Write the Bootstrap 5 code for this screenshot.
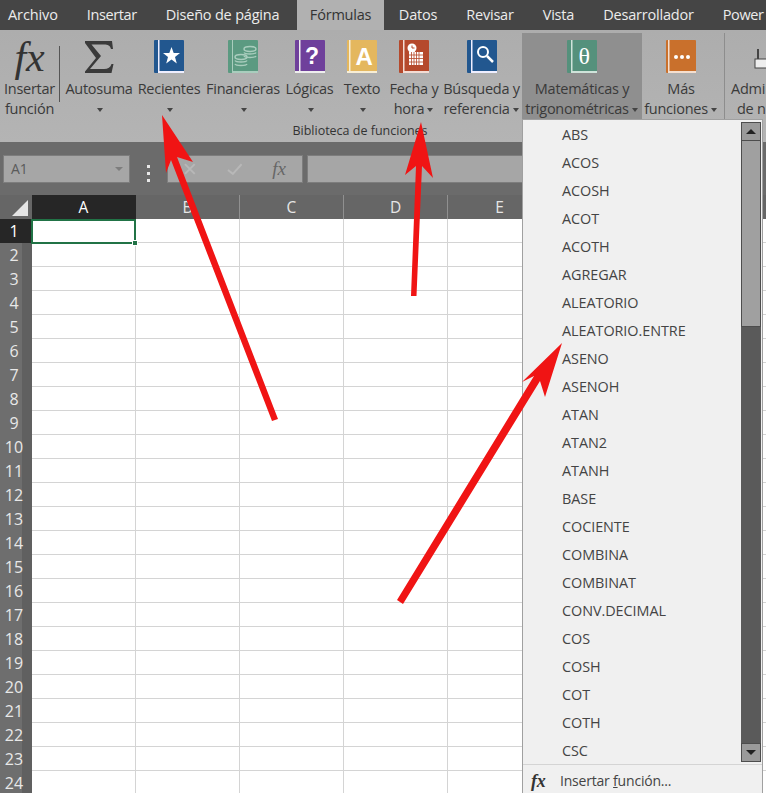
<!DOCTYPE html>
<html lang="es">
<head>
<meta charset="utf-8">
<title>Excel - Fórmulas</title>
<link href="https://cdn.jsdelivr.net/npm/bootstrap@5.3.0/dist/css/bootstrap.min.css" rel="stylesheet">
<style>
html,body{margin:0;background:#fff;}
body{font-family:"Open Sans","Noto Sans",sans-serif;color:#333;}
.xl-app{width:766px;height:793px;overflow:hidden;position:relative;}
.xl-tabs{height:30px;background:#454545;color:#ececec;font-size:14.5px;white-space:nowrap;}
.xl-tab{height:30px;line-height:30px;padding:0 14.5px;flex:none;letter-spacing:-.2px;}
.xl-tab-first{padding-left:8px;letter-spacing:-.1px;}
.xl-tab-tight{letter-spacing:-.4px;}
.xl-tab-on{background:#b1b1b1;color:#333;padding:0 13px;margin:0 0 0 3px;}
.xl-tab-last{padding-right:0;letter-spacing:-.35px;}
.xl-ribbon{height:112px;background:linear-gradient(#adadad,#b4b4b4);position:relative;}
.xl-tool{flex:none;height:86px;margin-top:3px;font-size:14.5px;line-height:20px;text-align:center;color:#3a3a3a;white-space:nowrap;letter-spacing:-.25px;}
.xl-iconbox{height:46px;display:flex;align-items:center;justify-content:center;padding-top:1px;}
.xl-tool-on{background:#8f8f8f;}
.xl-caret{display:inline-block;width:0;height:0;border:3.5px solid transparent;border-top:4px solid #444;border-bottom:0;vertical-align:middle;margin:0 1px 0 3px;}
.xl-sep{flex:none;width:1px;background:#8d8d8d;}
.xl-sep-a{height:56px;margin:16px 5px 0 0;background:#555;}
.xl-sep-b{height:100px;margin:3px 2px 0 5px;}
.w-a{width:59px}.w-b{width:68px}.w-d{width:76px}.w-e{width:53px}.w-f{width:48px}.w-g{width:52px}.w-h{width:81px}.w-i{width:120px}.w-j{width:76px}.w-k{width:39px;}
.xl-gap2{margin-right:2px}
.xl-gap1{margin-right:1px}
.xl-cut{text-align:left;}
.xl-cut-in{padding-left:10px;}
.xl-grouplabel{position:absolute;left:0;width:720px;top:92px;text-align:center;font-size:12.5px;color:#333;}
.xl-fx{font-family:"Liberation Serif",serif;font-style:italic;font-size:42px;line-height:40px;color:#333;}
.xl-fbar{height:53px;background:#6b6b6b;padding:13px 0 0 3px;}
.xl-box{height:28px;background:#a6a6a6;border:1px solid #7d7d7d;flex:none;}
.xl-name{width:127px;font-size:14px;line-height:26px;padding-left:7px;color:#5a5a5a;}
.xl-name i{display:block;width:0;height:0;border:4px solid transparent;border-top:4px solid #7d7d7d;border-bottom:0;margin-right:6px;}
.xl-dots{width:37px;flex:none;color:#eee;font-size:0;}
.xl-dots i{display:block;width:3px;height:3px;background:#e8e8e8;margin:2px 0;}
.xl-fxbox{width:136px;padding-left:15px;gap:30px;}
.xl-input{width:300px;margin-left:4px;}
.xl-hfx{font-family:"Liberation Serif",serif;font-style:italic;font-size:19px;color:#666;line-height:24px;margin-left:auto;margin-right:16px;}
.xl-heads{height:24px;background:#666;color:#e6e6e6;font-size:15.5px;}
.xl-corner{width:32px;flex:none;position:relative;}
.xl-corner i{position:absolute;left:12px;top:5px;width:0;height:0;border-left:16px solid transparent;border-bottom:16px solid #e4e4e4;}
.xl-col{width:104px;flex:none;line-height:24px;text-align:center;border-right:1px solid #909090;}
.xl-col-first{width:104px;background:#262626;color:#fff;border-right-color:#262626;}
.xl-sheet{height:600px;}
.xl-rowheads{width:32px;flex:none;background:linear-gradient(90deg,#6e6e6e 22px,#606060 22px);color:#e8e8e8;font-size:16px;}
.xl-rh{height:24px;line-height:24px;text-align:center;padding-right:4px;}
.xl-rh-on{background:#262626;color:#fff;}
.xl-cells{flex:1;position:relative;background-color:#fff;background-size:100% 24px,104px 100%;background-image:linear-gradient(to top,#d4d4d4 1px,transparent 1px),linear-gradient(to left,#d4d4d4 1px,transparent 1px);}
.xl-sel{position:absolute;left:-1px;top:0;width:105px;height:25px;border:2px solid #217346;}
.xl-sel i{position:absolute;right:-4px;bottom:-4px;width:6px;height:6px;background:#217346;border:1px solid #fff;}
.xl-menu{position:absolute;left:522px;top:119px;width:241px;height:674px;background:#f0f0f0;border:1px solid #a0a0a0;border-bottom:0;font-size:14.4px;color:#444;}
.xl-list{height:644px;margin:0;padding:0;list-style:none;}
.xl-item{height:28px;line-height:30px;padding-left:39px;letter-spacing:-.05px;}
.xl-foot{border-top:1px solid #d4d4d4;height:29px;line-height:28px;padding:3px 0 0 8px;font-size:14px;letter-spacing:-.2px;}
.xl-foot .xl-ffx{font-family:"Liberation Serif",serif;font-style:italic;font-weight:bold;font-size:18px;width:29px;color:#333;}
.xl-scroll{position:absolute;left:218px;top:2px;width:20px;height:640px;background:#5a5a5a;}
.xl-sb{height:19px;background:#9a9a9a;border:1px solid #4d4d4d;display:flex;align-items:center;justify-content:center;}
.xl-up{border:5px solid transparent;border-bottom:5px solid #222;border-top:0;}
.xl-dn{border:5px solid transparent;border-top:5px solid #222;border-bottom:0;}
.xl-thumb{height:186px;background:#a0a0a0;border:1px solid #4d4d4d;border-top:0;}
.xl-arrows{position:absolute;left:0;top:0;pointer-events:none;}
</style>
</head>
<body>
<div class="xl-app">
  <div class="xl-tabs d-flex">
    <div class="xl-tab xl-tab-first">Archivo</div>
    <div class="xl-tab xl-tab-tight">Insertar</div>
    <div class="xl-tab">Diseño de página</div>
    <div class="xl-tab xl-tab-on">Fórmulas</div>
    <div class="xl-tab">Datos</div>
    <div class="xl-tab">Revisar</div>
    <div class="xl-tab">Vista</div>
    <div class="xl-tab">Desarrollador</div>
    <div class="xl-tab xl-tab-last">Power</div>
  </div>

  <div class="xl-ribbon d-flex">
    <div class="xl-tool w-a">
      <div class="xl-iconbox"><span class="xl-fx">fx</span></div>
      <div>Insertar</div><div>función</div>
    </div>
    <div class="xl-sep xl-sep-a"></div>
    <div class="xl-tool w-b xl-gap2">
      <div class="xl-iconbox">
        <svg width="30" height="34" viewBox="0 0 30 34"><path d="M1 1H28L29 9H27C26 5.500 24 4.500 20 4.500H7.500L17 16 6 29H20C24 29 26.500 27.500 27.500 24H29.500L27.500 33H1V31.500L12 18 1 3Z" fill="#3a3a3a"/></svg>
      </div>
      <div>Autosuma</div><div><span class="xl-caret"></span></div>
    </div>
    <div class="xl-tool w-b xl-gap2">
      <div class="xl-iconbox">
        <svg width="32" height="36" viewBox="0 0 32 36"><rect x="1" y="1" width="30" height="33" rx="1" fill="#22578f"/><rect x="5" y="1" width="1.5" height="32" fill="#eef"/><rect x="5" y="32" width="26" height="2" fill="#eef"/><polygon points="18.5,8 20.7,14 27,14 22,18 23.8,24.5 18.5,20.6 13.2,24.5 15,18 10,14 16.3,14" fill="#fff"/></svg>
      </div>
      <div>Recientes</div><div><span class="xl-caret"></span></div>
    </div>
    <div class="xl-tool w-d xl-gap2">
      <div class="xl-iconbox">
        <svg width="32" height="36" viewBox="0 0 32 36"><rect x="1" y="1" width="30" height="33" rx="1" fill="#5b9a81"/><rect x="5" y="1" width="1" height="32" fill="#a9cdbd"/><rect x="5" y="32" width="26" height="2" fill="#a9cdbd"/><g fill="none" stroke="#a9cdbd" stroke-width="1.5"><ellipse cx="23" cy="10" rx="6" ry="2.4"/><path d="M17 13.5c1 2 11 2 12 0M17 17c1 2 11 2 12 0"/><ellipse cx="14" cy="18" rx="6" ry="2.4"/><path d="M8 21.5c1 2 11 2 12 0M8 25c1 2 11 2 12 0"/></g></svg>
      </div>
      <div>Financieras</div><div><span class="xl-caret"></span></div>
    </div>
    <div class="xl-tool w-e xl-gap2">
      <div class="xl-iconbox">
        <svg width="32" height="36" viewBox="0 0 32 36"><rect x="1" y="1" width="30" height="33" rx="1" fill="#6f409b"/><rect x="5" y="1" width="1.5" height="32" fill="#eee"/><rect x="1" y="32" width="30" height="2" fill="#eee"/><text x="18" y="25" text-anchor="middle" font-family="Liberation Sans,sans-serif" font-weight="700" font-size="23" fill="#fff">?</text></svg>
      </div>
      <div>Lógicas</div><div><span class="xl-caret"></span></div>
    </div>
    <div class="xl-tool w-f xl-gap2">
      <div class="xl-iconbox">
        <svg width="32" height="36" viewBox="0 0 32 36"><rect x="1" y="1" width="30" height="33" rx="1" fill="#e4b75e"/><rect x="3" y="1" width="1.5" height="32" fill="#f8eed5"/><rect x="1" y="32" width="30" height="2" fill="#f8eed5"/><text x="18" y="26" text-anchor="middle" font-family="Liberation Sans,sans-serif" font-weight="700" font-size="24" fill="#fff">A</text></svg>
      </div>
      <div>Texto</div><div><span class="xl-caret"></span></div>
    </div>
    <div class="xl-tool w-g xl-gap1">
      <div class="xl-iconbox">
        <svg width="32" height="36" viewBox="0 0 32 36"><rect x="1" y="1" width="30" height="33" rx="1" fill="#b5492c"/><rect x="5" y="1" width="1.5" height="32" fill="#f3dcd4"/><rect x="5" y="32" width="26" height="2" fill="#f3dcd4"/><circle cx="14" cy="9" r="4.5" fill="#fff"/><path d="M14 6.5V9h2.5" stroke="#b5492c" fill="none" stroke-width="1"/><rect x="11" y="13" width="14" height="13" fill="#fff"/><path d="M13.5 13v13M16 13v13M18.500 13v13M21 13v13M11 16h14M11 19.500h14M11 23h14" stroke="#b5492c" stroke-width=".8"/></svg>
      </div>
      <div>Fecha y</div><div>hora<span class="xl-caret"></span></div>
    </div>
    <div class="xl-tool w-h">
      <div class="xl-iconbox">
        <svg width="32" height="36" viewBox="0 0 32 36"><rect x="1" y="1" width="30" height="33" rx="1" fill="#22578f"/><rect x="5" y="1" width="1.5" height="32" fill="#eef"/><rect x="5" y="32" width="26" height="2" fill="#eef"/><circle cx="17" cy="13" r="5" fill="none" stroke="#fff" stroke-width="2"/><path d="M21 17l6 6" stroke="#fff" stroke-width="2.500"/></svg>
      </div>
      <div>Búsqueda y</div><div>referencia<span class="xl-caret"></span></div>
    </div>
    <div class="xl-tool w-i xl-tool-on xl-gap1">
      <div class="xl-iconbox">
        <svg width="32" height="36" viewBox="0 0 32 36"><rect x="1" y="1" width="30" height="33" rx="1" fill="#55917c"/><rect x="5" y="1" width="1.5" height="32" fill="#cfe3da"/><rect x="5" y="32" width="26" height="2" fill="#cfe3da"/><text x="18" y="25" text-anchor="middle" font-family="Liberation Serif,serif" font-size="24" fill="#fff">θ</text></svg>
      </div>
      <div>Matemáticas y</div><div>trigonométricas<span class="xl-caret"></span></div>
    </div>
    <div class="xl-tool w-j">
      <div class="xl-iconbox">
        <svg width="32" height="36" viewBox="0 0 32 36"><rect x="1" y="1" width="30" height="33" rx="1" fill="#c9702c"/><rect x="3" y="1" width="1.500" height="32" fill="#f5dfcf"/><rect x="3" y="32" width="28" height="2" fill="#f5dfcf"/><circle cx="11" cy="18" r="2" fill="#fff"/><circle cx="17" cy="18" r="2" fill="#fff"/><circle cx="23" cy="18" r="2" fill="#fff"/></svg>
      </div>
      <div>Más</div><div>funciones<span class="xl-caret"></span></div>
    </div>
    <div class="xl-sep xl-sep-b"></div>
    <div class="xl-tool w-k xl-cut">
      <div class="xl-iconbox justify-content-end">
        <svg width="12" height="36" viewBox="0 0 12 36"><rect x="1" y="20" width="14" height="9" fill="#eee" stroke="#444"/><path d="M4 10v10" stroke="#444" stroke-width="2"/></svg>
      </div>
      <div class="ps-1">Admi</div><div class="xl-cut-in">de n</div>
    </div>
    <div class="xl-grouplabel">Biblioteca de funciones</div>
  </div>

  <div class="xl-fbar d-flex">
    <div class="xl-box xl-name d-flex align-items-center justify-content-between">A1<i></i></div>
    <div class="xl-dots d-flex flex-column justify-content-start align-items-center pt-2"><i></i><i></i><i></i></div>
    <div class="xl-box xl-fxbox d-flex align-items-center">
      <svg width="14" height="14" viewBox="0 0 14 14"><path d="M2 2l10 10M12 2L2 12" stroke="#b8b8b8" stroke-width="2"/></svg>
      <svg width="16" height="14" viewBox="0 0 16 14"><path d="M1 8l5 4L15 2" fill="none" stroke="#b8b8b8" stroke-width="2"/></svg>
      <span class="xl-hfx">fx</span>
    </div>
    <div class="xl-box xl-input"></div>
  </div>

  <div class="xl-heads d-flex">
    <div class="xl-corner"><i></i></div>
    <div class="xl-col xl-col-first">A</div>
    <div class="xl-col">B</div>
    <div class="xl-col">C</div>
    <div class="xl-col">D</div>
    <div class="xl-col">E</div>
    <div class="xl-col"></div>
    <div class="xl-col"></div>
  </div>

  <div class="xl-sheet d-flex">
    <div class="xl-rowheads">
      <div class="xl-rh xl-rh-on">1</div><div class="xl-rh">2</div><div class="xl-rh">3</div><div class="xl-rh">4</div><div class="xl-rh">5</div><div class="xl-rh">6</div><div class="xl-rh">7</div><div class="xl-rh">8</div><div class="xl-rh">9</div><div class="xl-rh">10</div><div class="xl-rh">11</div><div class="xl-rh">12</div><div class="xl-rh">13</div><div class="xl-rh">14</div><div class="xl-rh">15</div><div class="xl-rh">16</div><div class="xl-rh">17</div><div class="xl-rh">18</div><div class="xl-rh">19</div><div class="xl-rh">20</div><div class="xl-rh">21</div><div class="xl-rh">22</div><div class="xl-rh">23</div><div class="xl-rh">24</div>
    </div>
    <div class="xl-cells"><div class="xl-sel"><i></i></div></div>
  </div>

  <div class="xl-menu">
    <ul class="xl-list">
      <li class="xl-item">ABS</li><li class="xl-item">ACOS</li><li class="xl-item">ACOSH</li><li class="xl-item">ACOT</li><li class="xl-item">ACOTH</li><li class="xl-item">AGREGAR</li><li class="xl-item">ALEATORIO</li><li class="xl-item">ALEATORIO.ENTRE</li><li class="xl-item">ASENO</li><li class="xl-item">ASENOH</li><li class="xl-item">ATAN</li><li class="xl-item">ATAN2</li><li class="xl-item">ATANH</li><li class="xl-item">BASE</li><li class="xl-item">COCIENTE</li><li class="xl-item">COMBINA</li><li class="xl-item">COMBINAT</li><li class="xl-item">CONV.DECIMAL</li><li class="xl-item">COS</li><li class="xl-item">COSH</li><li class="xl-item">COT</li><li class="xl-item">COTH</li><li class="xl-item">CSC</li>
    </ul>
    <div class="xl-scroll d-flex flex-column">
      <div class="xl-sb"><span class="xl-up"></span></div>
      <div class="xl-thumb"></div>
      <div class="flex-grow-1"></div>
      <div class="xl-sb"><span class="xl-dn"></span></div>
    </div>
    <div class="xl-foot d-flex align-items-center"><span class="xl-ffx">fx</span><span>Insertar <u>f</u>unción...</span></div>
  </div>

  <svg class="xl-arrows" width="766" height="793" viewBox="0 0 766 793">
    <g fill="#f01414">
      <polygon points="162,115 193,162 177,157 278,419 272,421 171,160 166,173"/>
      <polygon points="421,122 433,178 422,166 416.500,296 411,296 416,166 405,175"/>
      <polygon points="562,343 545,397 540,381 403,604 397,600 534,376 522,382"/>
    </g>
  </svg>
</div>
</body>
</html>
